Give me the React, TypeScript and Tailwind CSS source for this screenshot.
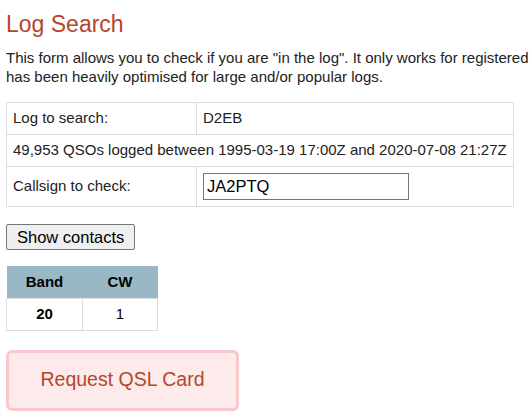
export default function App() {
  return (
    <div className="min-h-[420px] overflow-hidden bg-white px-[6px] text-[#222] font-['Liberation_Sans',Arial,sans-serif]">
      <h1 className="pt-[10px] text-[23px] leading-[28px] text-[#b4472b]">Log Search</h1>
      <p className="mt-[10px] whitespace-nowrap text-[15px] leading-[19px]">
        This form allows you to check if you are "in the log". It only works for registered logs and
        <br />
        has been heavily optimised for large and/or popular logs.
      </p>

      <table className="mt-[16px] w-[508px] border-collapse text-[15px]">
        <tbody>
          <tr className="h-[32px]">
            <td className="w-[190px] border border-[#ddd] px-[6px]">Log to search:</td>
            <td className="border border-[#ddd] px-[6px]">D2EB</td>
          </tr>
          <tr className="h-[32px]">
            <td colSpan={2} className="border border-[#ddd] px-[6px] whitespace-nowrap">
              49,953 QSOs logged between 1995-03-19 17:00Z and 2020-07-08 21:27Z
            </td>
          </tr>
          <tr className="h-[40px]">
            <td className="border border-[#ddd] px-[6px]">Callsign to check:</td>
            <td className="border border-[#ddd] px-[6px]">
              <input
                defaultValue="JA2PTQ"
                className="block h-[27px] w-[206px] border border-[#767676] px-[3px] text-[16.5px] text-black outline-none"
              />
            </td>
          </tr>
        </tbody>
      </table>

      <button className="mt-[17px] block h-[26px] rounded-[2px] border border-[#767676] bg-[#efefef] px-[10px] text-[16.5px] leading-[20px] text-black">
        Show contacts
      </button>

      <table className="mt-[16px] w-[152px] border-collapse text-[15px] text-black">
        <thead>
          <tr className="h-[32px] bg-[#98b8c5]">
            <th className="w-[76px] font-bold">Band</th>
            <th className="font-bold">CW</th>
          </tr>
        </thead>
        <tbody>
          <tr className="h-[32px]">
            <td className="border border-[#ddd] text-center font-bold">20</td>
            <td className="border border-[#ddd] text-center">1</td>
          </tr>
        </tbody>
      </table>

      <button className="mt-[19px] block h-[61px] w-[233px] rounded-[6px] border-[3px] border-[#f7c9cb] bg-[#fdeaea] text-[19.5px] text-[#b4472b]">
        Request QSL Card
      </button>
    </div>
  );
}
